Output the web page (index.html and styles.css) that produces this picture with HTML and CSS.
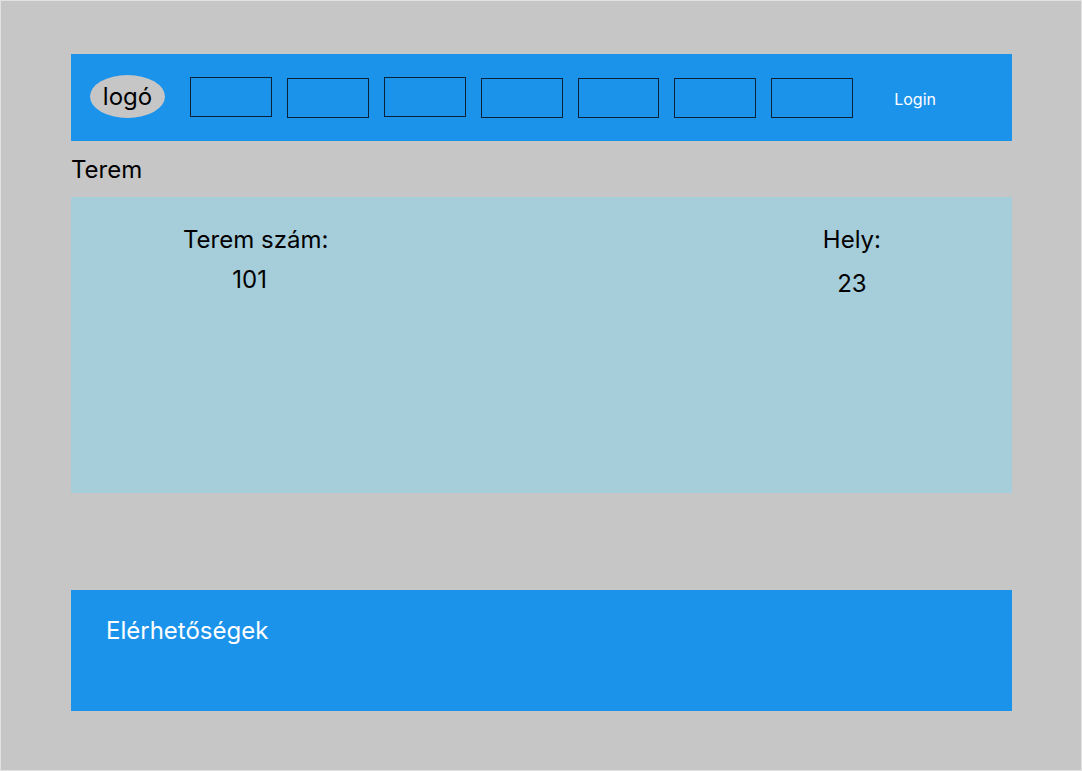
FILE: index.html
```html
<!DOCTYPE html>
<html lang="hu">
<head>
  <meta charset="utf-8">
  <meta name="viewport" content="width=device-width, initial-scale=1">
  <title>Terem</title>
  <link rel="stylesheet" href="styles.css">
</head>
<body>
  <div class="page">
    <header class="header">
      <div class="logo">logó</div>
      <nav class="nav">
        <button class="nav-item nav-item-raised" type="button"></button>
        <button class="nav-item" type="button"></button>
        <button class="nav-item nav-item-raised" type="button"></button>
        <button class="nav-item" type="button"></button>
        <button class="nav-item" type="button"></button>
        <button class="nav-item" type="button"></button>
        <button class="nav-item" type="button"></button>
      </nav>
      <a class="login" href="#">Login</a>
    </header>
    <main class="main">
      <h1 class="title">Terem</h1>
      <dl class="panel">
        <div class="field field-room">
          <dt>Terem szám:</dt>
          <dd>101</dd>
        </div>
        <div class="field field-seats">
          <dt>Hely:</dt>
          <dd>23</dd>
        </div>
      </dl>
    </main>
    <footer class="footer">
      <h2 class="footer-title">Elérhetőségek</h2>
    </footer>
  </div>
</body>
</html>
```

FILE: styles.css
```css
* {
  box-sizing: border-box;
}

body {
  margin: 0;
  background: #c6c6c6;
  color: #000;
  font-family: Inter, "Liberation Sans", sans-serif;
  font-size: 24px;
  line-height: 29px;
}

.page {
  display: flex;
  flex-direction: column;
  min-height: 100vh;
  padding: 53px 69px 59px 70px;
  border: 1px solid #e2e2e2;
}

.header {
  display: flex;
  align-items: center;
  padding: 21px 76px 23px 19px;
  background: #1c93eb;
}

.logo {
  display: flex;
  align-items: center;
  justify-content: center;
  width: 75px;
  height: 43px;
  border-radius: 50%;
  background: #c6c6c6;
}

.nav {
  display: flex;
  flex: 1;
  align-items: flex-end;
  align-self: flex-end;
  gap: 15px;
  height: 41px;
  margin: 0 41px 0 25px;
}

.nav-item {
  flex: 1;
  height: 40px;
  padding: 0;
  border: 1px solid #0a2238;
  background: transparent;
}

.nav-item-raised {
  align-self: flex-start;
}

.login {
  padding-top: 6px;
  color: #fff;
  font-size: 16px;
  text-decoration: none;
}

.title,
.footer-title {
  margin: 0;
  font-size: 24px;
  font-weight: 400;
}

.title {
  padding: 14px 0 13px;
}

.panel {
  display: flex;
  align-items: flex-start;
  justify-content: space-between;
  min-height: 296px;
  margin: 0;
  padding: 28px 131px 28px 112px;
  background: #a6cdda;
}

.field {
  display: flex;
  flex-direction: column;
  text-align: center;
}

.field dd {
  margin: 0;
}

.field-room {
  gap: 11px;
}

.field-room dd {
  padding-right: 12px;
}

.field-seats {
  gap: 15px;
}

.footer {
  min-height: 121px;
  margin-top: auto;
  padding: 26px 35px;
  background: #1c93eb;
  color: #fff;
}
```
